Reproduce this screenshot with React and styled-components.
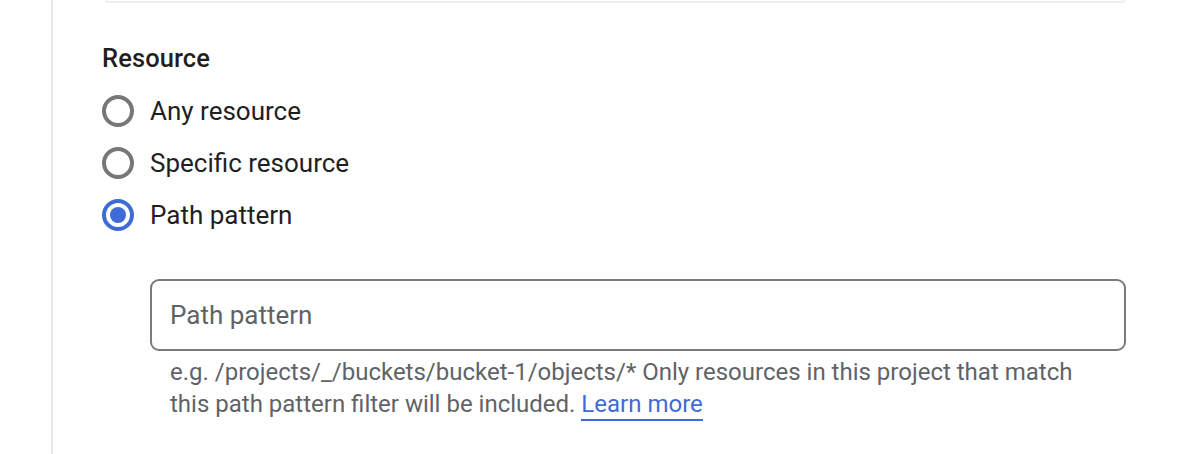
import React, { useState } from 'react';
import styled, { createGlobalStyle } from 'styled-components';

const GlobalStyle = createGlobalStyle`
  html, body {
    margin: 0;
    padding: 0;
    background: #ffffff;
    font-family: Roboto, "Liberation Sans", Arial, sans-serif;
  }
`;

const Page = styled.div`
  display: flex;
  min-height: 454px;
  background: #fff;
`;

const Rail = styled.div`
  width: 51px;
  flex: none;
  border-right: 2px solid #e9e9e9;
`;

const Content = styled.div`
  flex: 1;
  padding: 0 56px 0 49px;
  display: flex;
  flex-direction: column;
`;

const CardEdge = styled.div`
  height: 1px;
  margin: 0 1px 0 3px;
  border: 2px solid #eeeeee;
  border-top: none;
  border-radius: 0 0 8px 8px;
`;

const Heading = styled.div`
  margin-top: 39px;
  font-size: 25.5px;
  font-weight: 500;
  line-height: 32px;
  color: #1f1f1f;
  letter-spacing: 0.1px;
`;

const RadioList = styled.div`
  margin-top: 11px;
  display: flex;
  flex-direction: column;
`;

const RadioRow = styled.label`
  height: 52px;
  display: flex;
  align-items: center;
  gap: 16px;
  cursor: pointer;
`;

const Circle = styled.span`
  box-sizing: border-box;
  width: 32px;
  height: 32px;
  border-radius: 50%;
  border: 4px solid ${p => (p.$checked ? '#3e6bd6' : '#777777')};
  display: flex;
  align-items: center;
  justify-content: center;
  flex: none;

  &::after {
    content: '';
    width: 16px;
    height: 16px;
    border-radius: 50%;
    background: #3e6bd6;
    display: ${p => (p.$checked ? 'block' : 'none')};
  }
`;

const RadioText = styled.span`
  font-size: 26px;
  line-height: 32px;
  color: #1f1f1f;
`;

const Field = styled.div`
  margin: 38px 0 0 48px;
  display: flex;
  flex-direction: column;
`;

const Input = styled.input`
  box-sizing: border-box;
  height: 72px;
  width: 100%;
  border: 2px solid #7b7b7b;
  border-radius: 9px;
  padding: 0 18px;
  font-family: inherit;
  font-size: 26px;
  color: #1f1f1f;
  outline: none;

  &::placeholder {
    color: #5f6368;
  }
`;

const Helper = styled.div`
  margin-top: 5px;
  padding: 0 20px;
  font-size: 24px;
  line-height: 32px;
  color: #5f6368;
`;

const Link = styled.a`
  color: #3e6bd6;
  text-decoration: none;
  border-bottom: 2px solid #3e6bd6;
  padding-bottom: 1px;
  cursor: pointer;
`;

const options = ['Any resource', 'Specific resource', 'Path pattern'];

export default function App() {
  const [selected, setSelected] = useState('Path pattern');
  return (
    <>
      <GlobalStyle />
      <Page>
        <Rail />
        <Content>
          <CardEdge />
          <Heading>Resource</Heading>
          <RadioList>
            {options.map(o => (
              <RadioRow key={o} onClick={() => setSelected(o)}>
                <Circle $checked={selected === o} />
                <RadioText>{o}</RadioText>
              </RadioRow>
            ))}
          </RadioList>
          {selected === 'Path pattern' && (
            <Field>
              <Input placeholder="Path pattern" />
              <Helper>
                e.g. /projects/_/buckets/bucket-1/objects/* Only resources in this project that match this path pattern filter will be included.{' '}
                <Link>Learn more</Link>
              </Helper>
            </Field>
          )}
        </Content>
      </Page>
    </>
  );
}
